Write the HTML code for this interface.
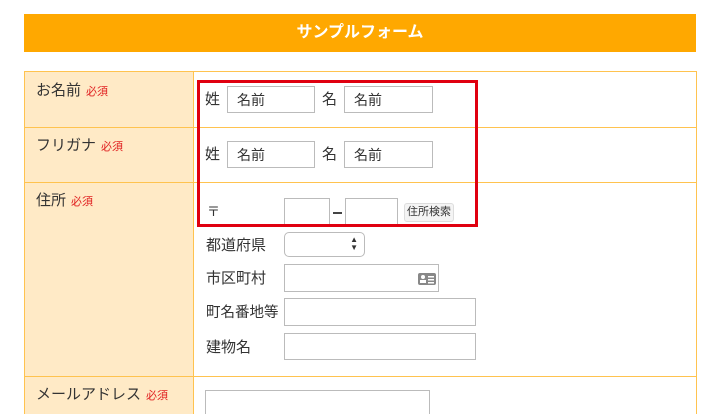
<!DOCTYPE html>
<html><head><meta charset="utf-8"><style>
*{margin:0;padding:0;box-sizing:border-box}
html,body{width:720px;height:414px;overflow:hidden}
body{background:#fff;font-family:"Liberation Sans","Noto Sans CJK JP",sans-serif;position:relative;color:#333}
.a{position:absolute}
.hdr{left:24px;top:14px;width:672px;height:38px;background:#FFA800;color:#fff;font-weight:bold;font-size:16px;text-align:center;line-height:38px}
.lab{left:24px;width:170px;background:#FFEAC6;border:1px solid #FFC34F}
.val{left:193px;width:504px;background:#fff;border:1px solid #FFC34F}
.lt{font-size:15px;color:#333}
.req{font-size:11px;color:#E02020;margin-left:5px}
.in{background:#fff;border:1px solid #bbb;font-size:14px;padding-left:9px;display:flex;align-items:center}
.t{font-size:15px}
</style></head><body>
<div class="a hdr">サンプルフォーム</div>
<div class="a lab" style="top:71px;height:57px"></div>
<div class="a val" style="top:71px;height:57px"></div>
<div class="a lab" style="top:127px;height:56px"></div>
<div class="a val" style="top:127px;height:56px"></div>
<div class="a lab" style="top:182px;height:195px"></div>
<div class="a val" style="top:182px;height:195px"></div>
<div class="a lab" style="top:376px;height:38px;border-bottom:none"></div>
<div class="a val" style="top:376px;height:38px;border-bottom:none"></div>

<div class="a lt" style="left:36px;top:79px">お名前<span class="req">必須</span></div>
<div class="a lt" style="left:36px;top:134px">フリガナ<span class="req">必須</span></div>
<div class="a lt" style="left:36px;top:189px">住所<span class="req">必須</span></div>
<div class="a lt" style="left:36px;top:383px">メールアドレス<span class="req">必須</span></div>

<div class="a t" style="left:205px;top:88px">姓</div>
<div class="a in" style="left:227px;top:86px;width:88px;height:27px">名前</div>
<div class="a t" style="left:322px;top:88px">名</div>
<div class="a in" style="left:344px;top:86px;width:89px;height:27px">名前</div>
<div class="a t" style="left:205px;top:143px">姓</div>
<div class="a in" style="left:227px;top:141px;width:88px;height:27px">名前</div>
<div class="a t" style="left:322px;top:143px">名</div>
<div class="a in" style="left:344px;top:141px;width:89px;height:27px">名前</div>

<div class="a t" style="left:207px;top:201px;font-size:13px">〒</div>
<div class="a in" style="left:284px;top:198px;width:46px;height:27px"></div>
<div class="a" style="left:333px;top:212px;width:9px;height:1.5px;background:#444"></div>
<div class="a in" style="left:345px;top:198px;width:53px;height:27px"></div>
<div class="a" style="left:404px;top:203px;width:50px;height:19px;background:#f4f4f4;border:1px solid #ddd;border-radius:3px;font-size:11px;text-align:center;line-height:17px">住所検索</div>

<div class="a t" style="left:206px;top:234px">都道府県</div>
<div class="a" style="left:284px;top:232px;width:81px;height:25px;border:1px solid #bbb;border-radius:5px;background:#fff"><span class="a" style="right:6px;top:3px;font-size:8px;line-height:8px;color:#333">▲<br>▼</span></div>
<div class="a t" style="left:206px;top:267px">市区町村</div>
<div class="a in" style="left:284px;top:264px;width:155px;height:28px"><svg class="a" style="left:133px;top:8px" width="18" height="12" viewBox="0 0 18 12"><rect x="0" y="0" width="18" height="12" rx="2" fill="#888"/><circle cx="5" cy="4" r="2" fill="#fff"/><rect x="2" y="7" width="6" height="3" fill="#fff"/><rect x="10" y="3" width="6" height="1.5" fill="#fff"/><rect x="10" y="6" width="6" height="1.5" fill="#fff"/><rect x="10" y="9" width="6" height="1.5" fill="#fff"/></svg></div>
<div class="a t" style="left:206px;top:301px;font-size:14.5px">町名番地等</div>
<div class="a in" style="left:284px;top:298px;width:192px;height:28px"></div>
<div class="a t" style="left:206px;top:336px">建物名</div>
<div class="a in" style="left:284px;top:333px;width:192px;height:27px"></div>

<div class="a in" style="left:205px;top:390px;width:225px;height:24px;border-bottom:none"></div>

<div class="a" style="left:197px;top:80px;width:281px;height:147px;border:3px solid #E00010"></div>
</body></html>
